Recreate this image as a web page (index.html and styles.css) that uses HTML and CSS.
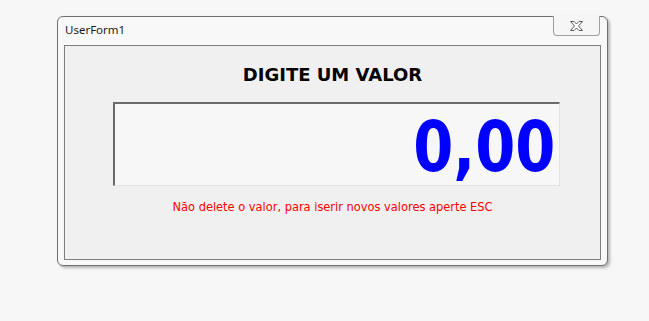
FILE: index.html
```html
<!DOCTYPE html>
<html lang="pt">
<head>
<meta charset="utf-8">
<title>UserForm1</title>
<link rel="stylesheet" href="styles.css">
</head>
<body>
<div class="window">
  <div class="titlebar">
    <span class="title">UserForm1</span>
    <button class="close" aria-label="Fechar">
      <svg width="13" height="10" viewBox="0 0 13 10">
        <path d="M0.5 0.5 H4 L6.5 3 L9 0.5 H12.5 L8.5 5 L12.5 9.5 H9 L6.5 7 L4 9.5 H0.5 L4.5 5 Z" fill="#ffffff" stroke="#5a5a5a" stroke-width="1" stroke-linejoin="miter"/>
      </svg>
    </button>
  </div>
  <div class="panel">
    <h1 class="heading">DIGITE UM VALOR</h1>
    <div class="valuebox"><span class="value">0,00</span></div>
    <p class="hint">Não delete o valor, para iserir novos valores aperte ESC</p>
  </div>
</div>
</body>
</html>
```

FILE: styles.css
```css
html, body {
  margin: 0;
  padding: 0;
}
body {
  background: #f7f7f7;
  width: 649px;
  height: 321px;
  overflow: hidden;
  font-family: "DejaVu Sans", sans-serif;
}
.window {
  box-sizing: border-box;
  margin: 16px 0 0 57px;
  width: 551px;
  height: 250px;
  border: 1px solid #6f6f6f;
  border-radius: 6px;
  background: #f8f8f8;
  box-shadow: 2px 2px 3px rgba(0, 0, 0, 0.28);
  display: flex;
  flex-direction: column;
  padding: 0 6px 5px 6px;
}
.titlebar {
  height: 28px;
  display: flex;
  justify-content: space-between;
  align-items: flex-start;
}
.title {
  font-family: "Noto Sans", sans-serif;
  font-size: 11.5px;
  color: #1a1a1a;
  margin: 5px 0 0 1px;
  line-height: 16px;
}
.close {
  box-sizing: border-box;
  margin: -1px 1px 0 0;
  width: 47px;
  height: 20px;
  border: 1px solid #a0a0a0;
  border-top: none;
  border-radius: 0 0 4px 4px;
  background: #f6f6f6;
  padding: 0;
  display: flex;
  align-items: center;
  justify-content: center;
}
.close svg {
  display: block;
  margin-top: 1px;
}
.panel {
  flex: 1;
  box-sizing: border-box;
  border: 1px solid #7e7e7e;
  background: #f0f0f0;
  display: flex;
  flex-direction: column;
  align-items: stretch;
}
.heading {
  margin: 18px 0 0 0;
  text-align: center;
  font-size: 18px;
  line-height: 22px;
  font-weight: bold;
  color: #000;
}
.valuebox {
  box-sizing: border-box;
  margin: 16px 0 0 48px;
  width: 447px;
  height: 84px;
  border-top: 2px solid #6b6b6b;
  border-left: 2px solid #6b6b6b;
  border-right: 1px solid #e3e3e3;
  border-bottom: 1px solid #e3e3e3;
  background: #f7f7f7;
  text-align: right;
  padding: 7px 4px 0 0;
  font-size: 70px;
  line-height: 73px;
  font-weight: bold;
  font-stretch: condensed;
  color: #0000ff;
}
.value {
  display: inline-block;
  transform: scaleX(0.915);
  transform-origin: right center;
}
.hint {
  margin: 13px 0 0 0;
  text-align: center;
  font-family: "DejaVu Sans", sans-serif;
  font-stretch: condensed;
  font-size: 12.7px;
  line-height: 15px;
  color: #ff0000;
}
```
